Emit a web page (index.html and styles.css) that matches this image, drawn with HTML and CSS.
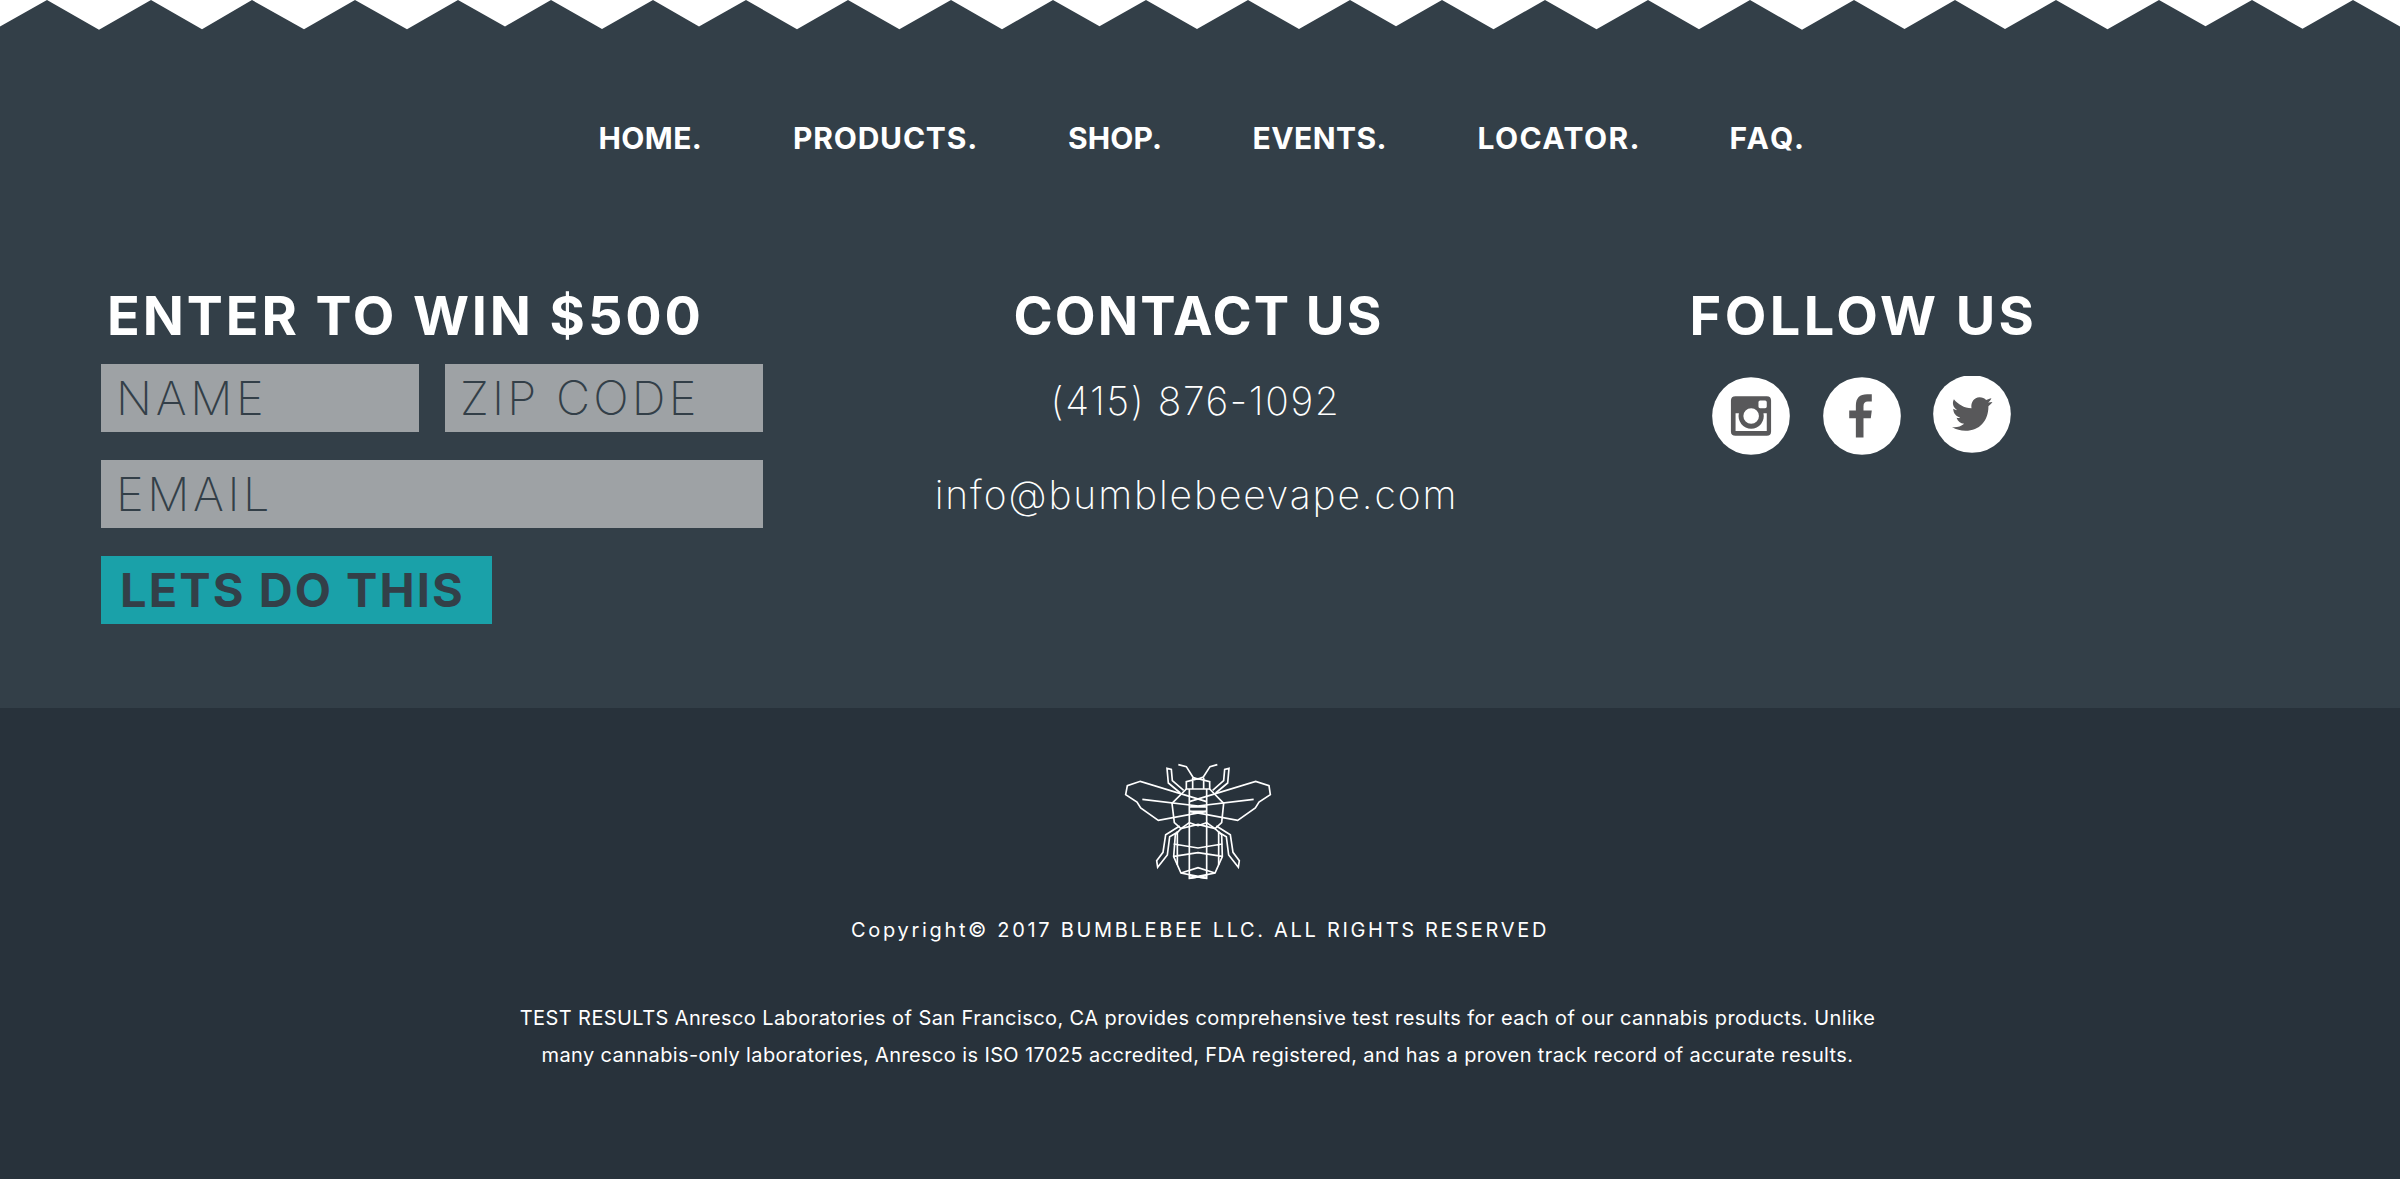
FILE: index.html
```html
<!DOCTYPE html>
<html lang="en">
<head>
<meta charset="utf-8">
<title>Bumblebee</title>
<link rel="stylesheet" href="styles.css">
</head>
<body>
<footer>
  <div class="upper">
    <svg class="zigzag" viewBox="0 0 2400 30" width="2400" height="30" aria-hidden="true">
      <path fill="#fff" d="M0 0V26.5L47 0L99 29.7L151 0L202 29.3L252 0L304 29.3L355 0L407 29.3L458 0L505 26.5L551 0L602 29L653 0L699 26.5L746 0L797 29.2L848 0L899.4 29.2L951 0L1002 29.2L1053 0L1099.5 26.3L1146 0L1197 29L1248 0L1299 29L1350 0L1396 26.3L1442 0L1493.5 29.3L1545 0L1596.5 29.3L1648 0L1699 29.2L1750 0L1802 29.7L1854 0L1904.5 29L1955 0L2005 29L2056 0L2107.5 29.3L2159 0L2205.5 26.3L2252 0L2302.5 28.8L2353 0L2400 26.5V0Z"/>
    </svg>
    <nav class="menu">
      <a class="m-home">HOME.</a>
      <a class="m-products">PRODUCTS.</a>
      <a class="m-shop">SHOP.</a>
      <a class="m-events">EVENTS.</a>
      <a class="m-locator">LOCATOR.</a>
      <a class="m-faq">FAQ.</a>
    </nav>
    <div class="columns">
      <form class="signup">
        <h2>ENTER TO WIN $500</h2>
        <div class="fields">
          <input class="name" placeholder="NAME">
          <input class="zip" placeholder="ZIP CODE">
          <input class="email" placeholder="EMAIL">
        </div>
        <button type="button">LETS DO THIS</button>
      </form>
      <section class="contact">
        <h2>CONTACT US</h2>
        <p class="phone">(415) 876-1092</p>
        <p class="mail">info@bumblebeevape.com</p>
      </section>
      <section class="follow">
        <h2>FOLLOW US</h2>
        <div class="social">
          <svg viewBox="96 290 235 235" width="78" height="78" aria-label="Instagram">
            <circle cx="213.5" cy="407.5" r="117" fill="#fff"/>
            <path fill="#58585a" fill-rule="evenodd" d="M167 348H261Q274 348 274 361V454Q274 467 261 467H167Q153 467 153 454V361Q153 348 167 348ZM241 361Q236 361 236 366V379Q236 384 241 384H256Q261 384 261 379V366Q261 361 256 361ZM167 399V453H261V399H251A38 38 0 1 1 177 399ZM214 384A23.500 23.500 0 1 0 214 431A23.500 23.500 0 1 0 214 384Z"/>
          </svg>
          <svg viewBox="429 290 235 235" width="78" height="78" aria-label="Facebook">
            <circle cx="546.5" cy="407.5" r="117" fill="#fff"/>
            <path fill="#58585a" d="M528 472V414H508V391H528V376Q528 342 562 342H576V364H564Q551 364 551 378V391H576L573 414H551V472Z"/>
          </svg>
          <svg class="twitter" viewBox="759 288 235 232" width="78" height="77" aria-label="Twitter">
            <circle cx="876.5" cy="402.500" r="117" fill="#fff"/>
            <path fill="#58585a" d="M822 358C835 374 852 384 875 385C872 367 883 353 899 352C908 352 914 355 919 360C925 359 930 356 935 355C933 361 929 365 925 368L938 366C935 371 930 375 926 379C926 423 899 453 857 453C842 453 829 450 816 442C829 444 842 441 853 432C841 431 834 425 830 414C834 415 838 415 841 414C828 410 820 400 820 387C824 389 828 391 832 391C819 382 816 369 822 358Z"/>
          </svg>
        </div>
      </section>
    </div>
  </div>
  <div class="lower">
    <svg class="bee" viewBox="0 60 720 360" width="240" height="120" aria-hidden="true">
      <g fill="none" stroke="#fff" stroke-width="5">
        <path d="M295 74L319 80L340 113L354 117L370 111L390 80L412 74"/>
        <path d="M319 147V125L354 116L389 125V147ZM338 113V147M371 113V147"/>
        <path d="M311 151L277 122L274 88L261 85L265 129L301 159M398 151L431 122L434 88L447 85L443 129L407 159"/>
        <path d="M380 185L181 124L142 137L137 164L171 186L182 204L235 241L380 214M328 185L527 124L567 137L571 164L537 186L526 204L473 241L328 214"/>
        <path d="M187 178L380 201M521 178L328 201M328 201H380M328 214H380"/>
        <path d="M319 147L276 190L283 248L303 266L354 253L405 266L425 248L431 190L389 147"/>
        <path d="M328 147V415L380 407M380 147V415L328 407"/>
        <path d="M303 266L328 248L354 257L380 248L405 266L425 284L427 350L405 399L354 409L303 399L281 350L286 284Z"/>
        <path d="M292 274V375M416 274V375M281 312L354 324L427 312M281 349L354 338L427 349M303 399L354 383L405 399M328 415L354 411L380 415"/>
        <path d="M299 258L257 284L249 337L230 362L233 382L262 345L269 290L292 277M409 258L451 284L459 337L478 362L475 382L446 345L439 290L416 277"/>
      </g>
    </svg>
    <p class="copyright">Copyright© 2017 BUMBLEBEE LLC. ALL RIGHTS RESERVED</p>
    <p class="results">TEST RESULTS Anresco Laboratories of San Francisco, CA provides comprehensive test results for each of our cannabis products. Unlike<br><span>many cannabis-only laboratories, Anresco is ISO 17025 accredited, FDA registered, and has a proven track record of accurate results.</span></p>
  </div>
</footer>
</body>
</html>
```
FILE: styles.css
```css
* { box-sizing: border-box; }
body { margin: 0; background: #28323b; color: #fff; font-family: Inter, "Liberation Sans", sans-serif; }
h2, p { margin: 0; }
.upper { height: 708px; background: #333f48; }
.zigzag { display: block; }

.menu {
  display: grid;
  grid-template-columns: 194.5px 275px 184.5px 225px 252px auto;
  padding: 88px 0 0 598.5px;
  font-size: 30px;
  font-weight: 700;
  line-height: 40px;
}
.m-home { letter-spacing: .4px; }
.m-products { letter-spacing: .8px; }
.m-shop { letter-spacing: .1px; }
.m-events { letter-spacing: .45px; }
.m-locator { letter-spacing: 1.4px; }
.m-faq { letter-spacing: 2.2px; }

.columns {
  display: grid;
  grid-template-columns: 662px 865px 466px;
  padding: 130px 0 0 101px;
}
h2 { font-size: 54px; line-height: 56px; font-weight: 700; white-space: nowrap; }
.signup h2 { padding-left: 6px; letter-spacing: 2.9px; }
.fields { display: grid; grid-template-columns: 318px 318px; gap: 28px 26px; padding-top: 20px; }
input {
  height: 68px;
  padding: 0 16px 2px 15px;
  border: 0;
  background: #9ea2a5;
  font: 200 47px Inter, sans-serif;
  min-width: 0;
}
input::placeholder { color: #333f48; opacity: 1; }
.name { letter-spacing: 3.7px; }
.zip { letter-spacing: 3.2px; }
.email { grid-column: span 2; letter-spacing: 3.55px; }
button {
  display: block;
  width: 391px;
  height: 68px;
  margin-top: 28px;
  padding: 0 0 2px 19px;
  border: 0;
  background: #1aa1a9;
  color: #333f48;
  font: 700 47px Inter, sans-serif;
  letter-spacing: 2.05px;
  text-align: left;
}

.contact, .follow { text-align: center; }
.contact h2 { padding-left: 6px; font-size: 53px; letter-spacing: 2.1px; }
.contact p { font-size: 39px; line-height: 60px; font-weight: 200; }
.contact .phone { padding-top: 27px; letter-spacing: 1.6px; }
.contact .mail { padding: 34px 0 0 2px; letter-spacing: 1.9px; }
.follow h2 { padding-left: 5px; letter-spacing: 3.45px; }
.social { display: flex; justify-content: center; gap: 33px; padding-top: 33px; }
.twitter { margin-left: -1px; margin-top: -1px; }

.lower { height: 471px; padding-top: 52px; text-align: center; }
.bee { display: block; margin: 0 auto; }
.copyright { padding-top: 35px; font-size: 20px; line-height: 30px; letter-spacing: 2.68px; }
.results { padding: 55px 5px 0 0; font-size: 20px; line-height: 37px; letter-spacing: .42px; }
.results span { letter-spacing: .38px; }
```
